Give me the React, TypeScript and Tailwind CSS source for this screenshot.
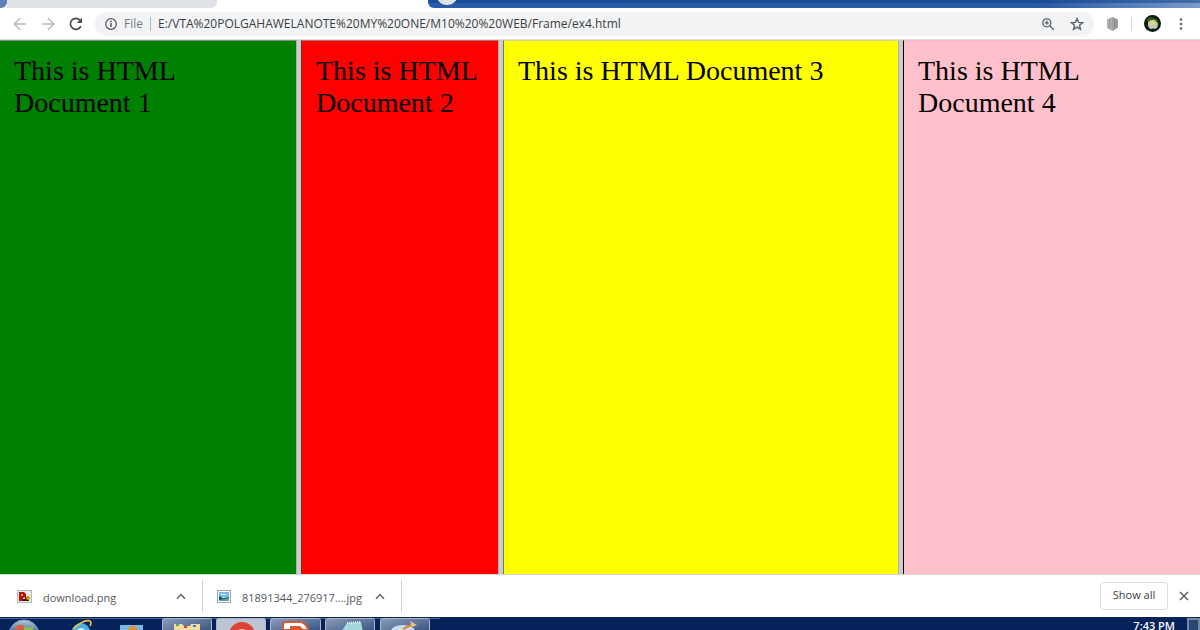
import { useState } from 'react';

const documents = [
    { id: 1, style: 'bg-[#008000] border-r border-r-[#b0b0b0] border-t border-t-[#7f8f7f]' },
    { id: 2, style: 'bg-[#ff0000] border-x border-l-[#8a2020] border-r-[#b0b0b0] border-t border-t-[#b07070]' },
    { id: 3, style: 'bg-[#ffff00] border-x border-l-[#77775a] border-r-[#b0b0b0] border-t border-t-[#d8d880]' },
    { id: 4, style: 'bg-[#ffc0cb] border-l border-l-black border-t border-t-[#f3bcc6]' },
];

const ArrowIcon = ({ flip = false }: { flip?: boolean }) => (
    <svg width="14" height="14" viewBox="0 0 14 14" fill="none" stroke="#b9bbbe" strokeWidth="1.6" className={flip ? 'rotate-180' : ''}>
        <path d="M13 7H1.8M7 1.2 1.2 7 7 12.8" />
    </svg>
);

const ReloadIcon = () => (
    <svg width="14" height="14" viewBox="0 0 14 14">
        <path d="M11.9 9.2A5.5 5.5 0 1 1 11 3.2" fill="none" stroke="#4b4e52" strokeWidth="1.7" />
        <path d="M13 .8V6H7.8z" fill="#4b4e52" />
    </svg>
);

const ThumbPng = () => (
    <svg width="15" height="13" viewBox="0 0 15 13">
        <rect x=".5" y=".5" width="14" height="12" fill="#efe8dc" stroke="#b4b7bd" />
        <path d="M2 2h5l2 2v3l-3 1v3H2z" fill="#b5120f" />
        <path d="M4 4h2v2H4z" fill="#f0b030" />
        <path d="M8 7h4v4H6V9h2z" fill="#2c1a10" />
        <circle cx="11" cy="8" r="2" fill="#dd8b16" />
    </svg>
);

const ThumbJpg = () => (
    <svg width="14" height="13" viewBox="0 0 14 13">
        <rect x=".5" y=".5" width="13" height="12" fill="#fff" stroke="#9da6b0" />
        <path d="M2 2h10v5H2z" fill="#78bce6" />
        <path d="M4 4h5v1H4z" fill="#e3f4fc" />
        <path d="M2 6l4 2 6-1v3H2z" fill="#164c6b" />
        <path d="M2 10l10-2v3H2z" fill="#51a9a3" />
    </svg>
);

const ChevronUp = () => (
    <svg width="10" height="7" viewBox="0 0 10 7" fill="none" stroke="#5f6368" strokeWidth="1.5">
        <path d="M1 5.8 5 1.5l4 4.3" />
    </svg>
);

const TabStrip = () => (
    <div className="flex h-2 shrink-0 overflow-hidden bg-white">
        <div className="w-[7px] rounded-br-md bg-[#5f80b5]" />
        <div className="w-[210px] rounded-br-md bg-[#dee1e6]" />
        <div className="w-[211px]" />
        <div className="flex-1 overflow-hidden rounded-bl-md bg-linear-to-r from-[#2a5ba8] via-[#2b5ba5] via-80% to-[#7b9bc8]">
            <svg width="100%" height="8" className="block">
                <rect width="100%" height="3" fill="#0b3f8a" opacity=".5" />
                <circle cx="19" cy="-6" r="11" fill="#dfe3e8" />
            </svg>
        </div>
    </div>
);

const Toolbar = ({ url, setUrl }: { url: string; setUrl: (value: string) => void }) => (
    <header className="flex h-8 shrink-0 items-center border-b border-[#dcdddf] bg-white font-['Open_Sans',sans-serif] text-xs text-[#3c4043]">
        <div className="flex w-[95px] items-center gap-[14px] pl-[13px]">
            <button aria-label="Back"><ArrowIcon /></button>
            <button aria-label="Forward"><ArrowIcon flip /></button>
            <button aria-label="Reload"><ReloadIcon /></button>
        </div>
        <div className="flex h-6 flex-1 items-center rounded-full bg-[#f1f3f4] px-[10px]">
            <svg width="12" height="12" viewBox="0 0 12 12" fill="none" stroke="#55585c" strokeWidth="1.2">
                <circle cx="6" cy="6" r="5.3" />
                <path d="M6 5v4M6 2.8v1.4" strokeWidth="1.5" />
            </svg>
            <label htmlFor="url" className="ml-[7px] text-[#75797e]">File</label>
            <span className="mx-[7px] h-[14px] w-px bg-[#b5b7ba]" />
            <input id="url" value={url} onChange={(e) => setUrl(e.target.value)} className="min-w-0 flex-1 bg-transparent outline-none" />
            <button aria-label="Zoom">
                <svg width="12" height="12" viewBox="0 0 12 12" fill="none" stroke="#5f6368" strokeWidth="1.3">
                    <circle cx="4.8" cy="4.8" r="4" />
                    <path d="m7.8 7.8 3.8 3.8M4.8 2.8v4M2.8 4.8h4" />
                </svg>
            </button>
            <button aria-label="Bookmark" className="ml-4">
                <svg width="14" height="14" viewBox="0 0 14 14" fill="none" stroke="#5f6368" strokeWidth="1.4">
                    <path d="m7 1.7 1.6 3.7 4 .3-3.1 2.6 1 4L7 10.1l-3.5 2.2 1-4-3.1-2.6 4-.3z" />
                </svg>
            </button>
        </div>
        <div className="flex items-center pr-[17px] pl-3">
            <button aria-label="Extension">
                <svg width="13" height="14" viewBox="0 0 13 14">
                    <path d="M6.5 0 12 2.5v8L6.5 14 1 10.5v-8z" fill="#9b9b9b" />
                    <path d="M6.5 0v14L1 10.5v-8z" fill="#b0b0b0" />
                    <path d="M4 2v10M9 2v10" stroke="#898989" strokeWidth=".7" />
                </svg>
            </button>
            <span className="mx-3 h-[14px] w-px bg-[#d4d5d8]" />
            <button aria-label="Profile">
                <svg width="17" height="17" viewBox="0 0 17 17">
                    <circle cx="8.5" cy="8.5" r="8.5" fill="#0b1a09" />
                    <path d="M2 5 6 2l7 2 2 5-3 5z" fill="#2c5a20" />
                    <path d="m4 7 3-2 4 0 3 4-2 4-5 1-3-3z" fill="#c3c9a6" />
                    <path d="m7 6 4 1-1 3-4 0z" fill="#e3d873" />
                    <path d="m4 10 3 1 1 3-3-1zM11 11l3-1-1 3-3 1z" fill="#b4c4ea" />
                </svg>
            </button>
            <button aria-label="Menu" className="ml-[18px]">
                <svg width="4" height="14" viewBox="0 0 4 14" fill="#5f6368">
                    <circle cx="2" cy="2.5" r="1.3" />
                    <circle cx="2" cy="7" r="1.3" />
                    <circle cx="2" cy="11.5" r="1.3" />
                </svg>
            </button>
        </div>
    </header>
);

const Downloads = ({ onClose }: { onClose: () => void }) => (
    <footer className="flex h-[43px] shrink-0 items-center border-t border-[#d6d6d6] bg-white font-['Open_Sans',sans-serif] text-[11px] text-[#54585d]">
        <div className="flex h-8 w-[203px] items-center border-r border-[#d0d2d5] pr-4 pl-[17px]">
            <ThumbPng />
            <span className="ml-[11px] flex-1 pt-1">download.png</span>
            <button aria-label="Options for download.png"><ChevronUp /></button>
        </div>
        <div className="flex h-8 w-[199px] items-center border-r border-[#d0d2d5] pr-4 pl-[14px]">
            <ThumbJpg />
            <span className="ml-[11px] flex-1 pt-1">81891344_276917....jpg</span>
            <button aria-label="Options for 81891344_276917....jpg"><ChevronUp /></button>
        </div>
        <button className="ml-auto h-7 w-[68px] rounded-sm border border-[#dadce0] pb-[2px] text-[#3c4043]">Show all</button>
        <button aria-label="Close" onClick={onClose} className="mx-[11px]">
            <svg width="10" height="10" viewBox="0 0 10 10" stroke="#5f6368" strokeWidth="1.6">
                <path d="m1 1 8 8M9 1 1 9" />
            </svg>
        </button>
    </footer>
);

const Taskbar = () => (
    <div className="flex h-[13px] shrink-0 items-start overflow-hidden border-t border-[#10254a] bg-[#05235a]">
        <svg width="440" height="12" viewBox="0 0 440 12" className="shrink-0">
            <defs>
                <linearGradient id="task" x1="0" y1="0" x2="1" y2="1">
                    <stop offset="0" stopColor="#8c9db9" />
                    <stop offset="1" stopColor="#2f4a7a" />
                </linearGradient>
                <linearGradient id="orb" x1="0" y1="0" x2="0" y2="1">
                    <stop offset="0" stopColor="#b7cbdc" />
                    <stop offset=".4" stopColor="#3f6f98" />
                </linearGradient>
            </defs>
            <path d="M0 .5h440" stroke="#4a6593" />
            <circle cx="24" cy="17" r="15" fill="url(#orb)" stroke="#8aa5c0" />
            <path d="M16 9q4-4 8-1l-2 6h-9z" fill="#e0603a" />
            <path d="M25 8q4 3 9 0l-2 6h-9z" fill="#8eb95a" />
            <circle cx="81" cy="14" r="9" fill="#4aaee5" />
            <path d="M77 12q4-4 8 0z" fill="#d9f2ff" />
            <path d="M73 11Q84 1 90 3q2 2 0 5" fill="none" stroke="#e8bd48" strokeWidth="1.6" />
            <rect x="120" y="7" width="23" height="8" fill="#78b9df" />
            <circle cx="133" cy="13" r="5" fill="#e98b38" />
            <g fill="url(#task)" stroke="#aab8cc">
                <rect x="162.5" y=".5" width="49" height="16" rx="2" />
                <rect x="216.5" y=".5" width="49" height="16" rx="2" fill="#bcc5d3" />
                <rect x="270.5" y=".5" width="50" height="16" rx="2" />
                <rect x="325.5" y=".5" width="49" height="16" rx="2" />
                <rect x="380.5" y=".5" width="49" height="16" rx="2" />
            </g>
            <path d="M174 6h8l2 2h6l1-2h9v8h-26z" fill="#f1dda0" />
            <path d="M176 7h3" stroke="#51a459" strokeWidth="2" />
            <path d="M184 9h3" stroke="#d9472d" strokeWidth="2" />
            <path d="M193 8h3" stroke="#3a81c5" strokeWidth="2" />
            <circle cx="242" cy="17" r="13" fill="#db4437" />
            <circle cx="242" cy="17" r="6" fill="#f3d9a4" />
            <path d="M283 12V7q0-3 3-3h15q6 2 7 8z" fill="#fff" stroke="#d65a36" strokeWidth="2" />
            <path d="M290 8h9q4 1 4 5h-13z" fill="#d65a36" />
            <path d="m347 5 14-1 2 10h-22z" fill="#a6d7df" />
            <path d="m347 5 14-1" stroke="#e9fbff" strokeWidth="2" strokeDasharray="1 1" />
            <ellipse cx="403" cy="13" rx="12" ry="6" fill="#c6deed" />
            <path d="m403 11 10-5" stroke="#dc8c2e" strokeWidth="2" />
            <path d="m410 3 7 4-5 2z" fill="#e7c48b" />
        </svg>
        <div className="ml-auto flex items-start gap-3 font-['Open_Sans',sans-serif] text-[11px] text-white">
            <span className="leading-4 font-semibold">7:43 PM</span>
            <span className="h-4 w-[13px] border-2 border-[#7588a5] bg-[#294773]" />
        </div>
    </div>
);

const App = () => {
    const [url, setUrl] = useState('E:/VTA%20POLGAHAWELANOTE%20MY%20ONE/M10%20%20WEB/Frame/ex4.html');
    const [showDownloads, setShowDownloads] = useState(true);

    return (
        <div className="flex h-screen flex-col">
            <TabStrip />
            <Toolbar url={url} setUrl={setUrl} />
            <main className="grid min-h-0 flex-1 grid-cols-[3fr_2fr_4fr_3fr] gap-x-1 bg-[#cccccc]">
                {documents.map((doc) => (
                    <section key={doc.id} className={`${doc.style} pt-[14px] pl-[14px]`}>
                        <p className="font-['Liberation_Serif',serif] text-[28px] leading-8 text-black">{`This is HTML Document ${doc.id}`}</p>
                    </section>
                ))}
            </main>
            {showDownloads && <Downloads onClose={() => setShowDownloads(false)} />}
            <Taskbar />
        </div>
    );
};

export default App;
